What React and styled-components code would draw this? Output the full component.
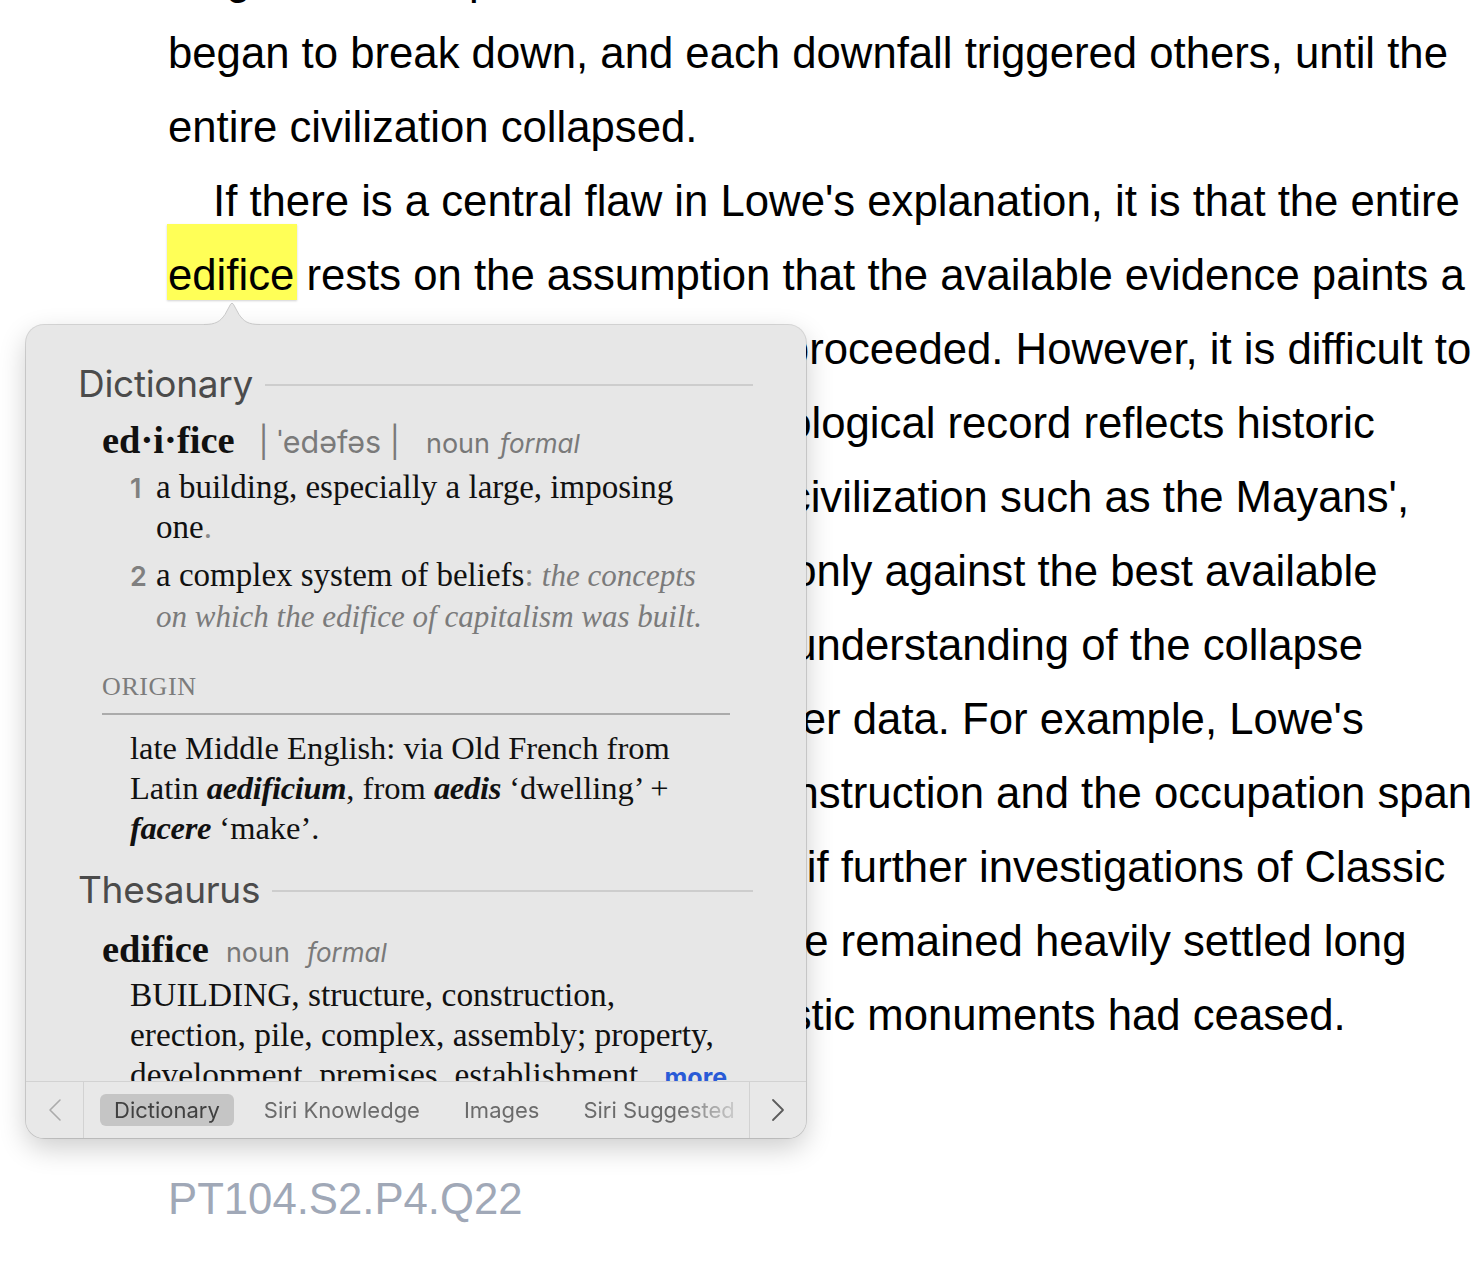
import React from "react";
import styled, { createGlobalStyle } from "styled-components";

const GlobalStyle = createGlobalStyle`
  html, body {
    margin: 0;
    padding: 0;
    background: #ffffff;
  }
  body {
    overflow: hidden;
  }
  #root {
    height: 1262px;
  }
`;

const lines = [
	"Its government practices and the trade network that sustained it",
	"began to break down, and each downfall triggered others, until the",
	"entire civilization collapsed.",
	"If there is a central flaw in Lowe's explanation, it is that the entire",
	"HIGHLIGHT",
	"true picture of how the collapse proceeded. However, it is difficult to",
	"know whether or not this archaeological record reflects historic",
	"reality, in the case of a complex civilization such as the Mayans',",
	"since his theory could be tested only against the best available",
	"evidence, and thus, our present understanding of the collapse",
	"may need revision in light of newer data. For example, Lowe's",
	"chronology for the monument construction and the occupation span",
	"could be shown to be inaccurate if further investigations of Classic",
	"Maya cities reveal that some zone remained heavily settled long",
	"after the construction of new artistic monuments had ceased.",
];

const tabs = ["Dictionary", "Siri Knowledge", "Images", "Siri Suggested"];

const App = () => {
	return (
		<Page>
			<GlobalStyle />
			<Passage>
				{lines.map((line, i) =>
					line === "HIGHLIGHT" ? (
						<Line key={i}>
							<Highlight>edifice</Highlight> rests on the assumption that
							the available evidence paints a
						</Line>
					) : (
						<Line key={i} $indent={i === 3}>
							{line}
						</Line>
					)
				)}
				<QuestionId>PT104.S2.P4.Q22</QuestionId>
			</Passage>

			<Popover>
				<Beak width="56" height="26" viewBox="0 0 56 26">
					<path
						d="M0 26 L0 23.5 C12 23.5 16 20.5 21 13.5 L26.6 3.2 Q28 1 29.4 3.2 L35 13.5 C40 20.5 44 23.5 56 23.5 L56 26 Z"
						fill="#e7e7e7"
					/>
					<path
						d="M0 23.5 C12 23.5 16 20.5 21 13.5 L26.6 3.2 Q28 1 29.4 3.2 L35 13.5 C40 20.5 44 23.5 56 23.5"
						fill="none"
						stroke="#c9c9c9"
						strokeWidth="1"
					/>
				</Beak>

				<PopBody>
					<SectionHead>
						<SectionTitle>Dictionary</SectionTitle>
						<HeadRule />
					</SectionHead>

					<EntryLine $gap={12}>
						<Headword>ed·i·fice</Headword>
						<Pron>| ˈedəfəs |</Pron>
						<Pos>noun</Pos>
						<Register $gap={10}>formal</Register>
					</EntryLine>

					<Sense $gap={-3}>
						<SenseNum>1</SenseNum>
						<SenseText>
							a building, especially a large, imposing
							<br />
							one<Grey>.</Grey>
						</SenseText>
					</Sense>
					<Sense $gap={8}>
						<SenseNum>2</SenseNum>
						<SenseText>
							a complex system of beliefs<Grey>:</Grey>{" "}
							<Example>the concepts</Example>
							<br />
							<Example>on which the edifice of capitalism was built.</Example>
						</SenseText>
					</Sense>

					<OriginLabel>ORIGIN</OriginLabel>
					<OriginRule />
					<Prose $gap={13} $size={32.5}>
						late Middle English: via Old French from
						<br />
						Latin <LatinWord>aedificium</LatinWord>, from{" "}
						<LatinWord>aedis</LatinWord> ‘dwelling’ +
						<br />
						<LatinWord>facere</LatinWord> ‘make’.
					</Prose>

					<SectionHead $gap={20}>
						<SectionTitle>Thesaurus</SectionTitle>
						<HeadRule />
					</SectionHead>

					<EntryLine $gap={15}>
						<Headword>edifice</Headword>
						<Pos $wide>noun</Pos>
						<Register $gap={17}>formal</Register>
					</EntryLine>

					<Prose $gap={-4} $size={33.4}>
						BUILDING, structure, construction,
						<br />
						erection, pile, complex, assembly; property,
						<br />
						development, premises, establishment,<More>more</More>
					</Prose>
				</PopBody>

				<TabBar>
					<NavButton $side="left">
						<svg width="14" height="24" viewBox="0 0 14 24">
							<polyline
								points="12,2 2,12 12,22"
								fill="none"
								stroke="#ababab"
								strokeWidth="1.6"
								strokeLinecap="round"
								strokeLinejoin="round"
							/>
						</svg>
					</NavButton>
					<TabStrip>
						{tabs.map((t, i) => (
							<Tab key={t} $active={i === 0}>
								{t}
							</Tab>
						))}
					</TabStrip>
					<NavButton $side="right">
						<svg width="14" height="24" viewBox="0 0 14 24">
							<polyline
								points="2,2 12,12 2,22"
								fill="none"
								stroke="#5c5c5c"
								strokeWidth="1.8"
								strokeLinecap="round"
								strokeLinejoin="round"
							/>
						</svg>
					</NavButton>
				</TabBar>
			</Popover>
		</Page>
	);
};

export default App;

// Styled Components

const Page = styled.div`
	position: relative;
	width: 1482px;
	height: 1262px;
	overflow: hidden;
	background: #ffffff;
`;

const Passage = styled.div`
	margin-top: -58px;
	padding-left: 168px;

	font-family: "Liberation Sans", Arial, sans-serif;
	font-size: 43.7px;
	line-height: 74px;
	color: #000000;
	white-space: nowrap;
`;

const Line = styled.div`
	padding-left: ${(props) => (props.$indent ? "45px" : "0")};
`;

const Highlight = styled.span`
	background: #ffff57;
	padding: 26px 3px 1px 1px;
	margin: 0 -3px 0 -1px;
	box-shadow: 0 1px 2px rgba(0, 0, 0, 0.18);
`;

const QuestionId = styled.div`
	margin-top: 110px;
	color: #a0a8b7;
`;

const Popover = styled.div`
	position: absolute;
	left: 26px;
	top: 325px;
	width: 780px;
	height: 813px;

	display: flex;
	flex-direction: column;

	background: #e7e7e7;
	border-radius: 18px;
	box-shadow: 0 0 0 1px rgba(0, 0, 0, 0.14), 0 10px 28px rgba(0, 0, 0, 0.2);
`;

const Beak = styled.svg`
	position: absolute;
	left: 178px;
	top: -24px;
	display: block;
`;

const PopBody = styled.div`
	flex: 1;
	overflow: hidden;
	padding: 37px 53px 0 52px;
`;

const SectionHead = styled.div`
	display: flex;
	align-items: center;
	gap: 12px;
	margin-top: ${(props) => props.$gap || 0}px;
`;

const SectionTitle = styled.div`
	font-family: Inter, "Noto Sans", sans-serif;
	font-size: 37px;
	line-height: 44px;
	color: #4b4b4b;
	letter-spacing: -0.3px;
`;

const HeadRule = styled.div`
	flex: 1;
	height: 2px;
	margin-top: 2px;
	background: #cdcdcd;
`;

const EntryLine = styled.div`
	margin-top: ${(props) => props.$gap}px;
	padding-left: 24px;
	line-height: 44px;
	white-space: nowrap;
`;

const Headword = styled.span`
	font-family: "Liberation Serif", "Times New Roman", serif;
	font-weight: 700;
	font-size: 38.5px;
	color: #111111;
`;

const Pron = styled.span`
	margin-left: 24px;
	font-family: Inter, "Noto Sans", sans-serif;
	font-size: 30.5px;
	color: #7a7a7a;
`;

const Pos = styled.span`
	margin-left: ${(props) => (props.$wide ? "17px" : "26px")};
	font-family: Inter, "Noto Sans", sans-serif;
	font-size: 27px;
	color: #777777;
`;

const Register = styled.span`
	margin-left: ${(props) => props.$gap}px;
	font-family: Inter, "Noto Sans", sans-serif;
	font-style: italic;
	font-size: 26px;
	color: #7a7a7a;
`;

const Sense = styled.div`
	display: grid;
	grid-template-columns: 26px auto;
	align-items: baseline;
	margin-top: ${(props) => props.$gap}px;
	padding-left: 52px;
`;

const SenseNum = styled.span`
	font-family: Inter, "Noto Sans", sans-serif;
	font-weight: 600;
	font-size: 27px;
	color: #808080;
`;

const SenseText = styled.div`
	font-family: "Liberation Serif", "Times New Roman", serif;
	font-size: 33px;
	line-height: 40px;
	color: #111111;
	white-space: nowrap;
`;

const Grey = styled.span`
	color: #8a8a8a;
`;

const Example = styled.span`
	font-style: italic;
	font-size: 31px;
	color: #7b7b7b;
`;

const OriginLabel = styled.div`
	margin-top: 35px;
	padding-left: 24px;
	font-family: "Liberation Serif", "Times New Roman", serif;
	font-size: 26px;
	line-height: 30px;
	letter-spacing: 0.6px;
	color: #7c7c7c;
`;

const OriginRule = styled.div`
	height: 2px;
	margin: 11px 23px 0 24px;
	background: #ababab;
`;

const Prose = styled.div`
	margin-top: ${(props) => props.$gap}px;
	padding-left: 52px;
	font-family: "Liberation Serif", "Times New Roman", serif;
	font-size: ${(props) => props.$size}px;
	line-height: 40px;
	color: #111111;
	white-space: nowrap;
`;

const LatinWord = styled.span`
	font-weight: 700;
	font-style: italic;
	letter-spacing: -0.3px;
`;

const More = styled.span`
	margin-left: 18px;
	font-family: Inter, "Noto Sans", sans-serif;
	font-weight: 700;
	font-size: 25px;
	color: #2a5bd7;
`;

const TabBar = styled.div`
	height: 56px;
	flex-shrink: 0;
	display: flex;
	align-items: stretch;
	border-top: 1px solid #d2d2d2;
	background: #e8e8e8;
	border-radius: 0 0 18px 18px;
`;

const NavButton = styled.div`
	width: ${(props) => (props.$side === "left" ? "57px" : "56px")};
	display: flex;
	align-items: center;
	justify-content: center;
	${(props) =>
		props.$side === "left"
			? "border-right: 1px solid #d2d2d2;"
			: "border-left: 1px solid #d2d2d2;"}
`;

const TabStrip = styled.div`
	flex: 1;
	display: flex;
	align-items: center;
	gap: 16px;
	padding-left: 16px;
	overflow: hidden;
	-webkit-mask-image: linear-gradient(to right, #000 592px, rgba(0, 0, 0, 0.1) 660px);
	mask-image: linear-gradient(to right, #000 592px, rgba(0, 0, 0, 0.1) 660px);
`;

const Tab = styled.div`
	flex-shrink: 0;
	padding: 0 14px;
	height: 32px;
	line-height: 32px;
	border-radius: 6px;
	font-family: Inter, "Noto Sans", sans-serif;
	font-size: 22px;
	white-space: nowrap;
	color: ${(props) => (props.$active ? "#404040" : "#6b6b6b")};
	background: ${(props) => (props.$active ? "#c5c5c5" : "transparent")};
`;
